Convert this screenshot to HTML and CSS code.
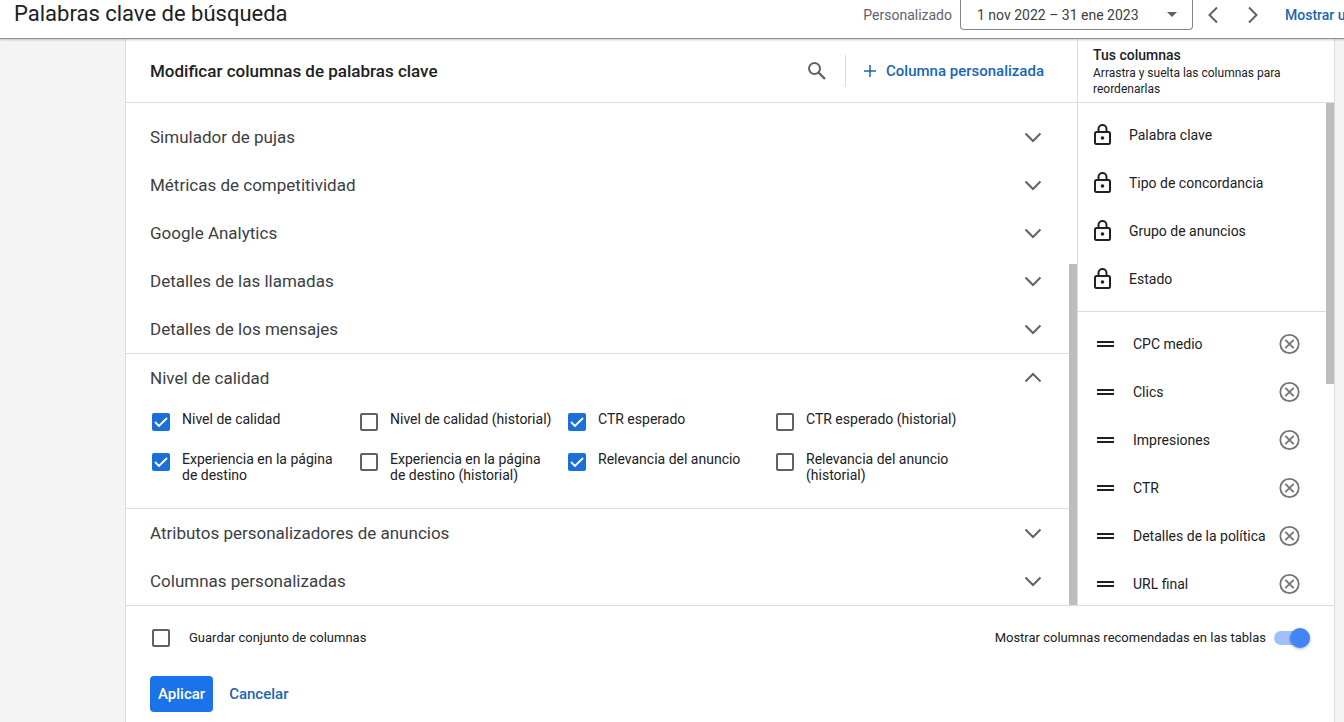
FILE: index.html
```html
<!DOCTYPE html>
<html lang="es">

<head>
    <meta charset="utf-8">
    <meta name="viewport" content="width=device-width, initial-scale=1">
    <title>Palabras clave de búsqueda</title>
    <link rel="stylesheet" href="styles.css">
</head>

<body>
    <!-- shared icons -->
    <svg class="sprite" aria-hidden="true">
        <symbol id="chevron-down" viewBox="0 0 24 24">
            <path d="M4.500 8.500 12 16l7.500-7.500" fill="none" stroke="currentColor" stroke-width="2" />
        </symbol>
        <symbol id="chevron-up" viewBox="0 0 24 24">
            <path d="M4.500 15.500 12 8l7.500 7.500" fill="none" stroke="currentColor" stroke-width="2" />
        </symbol>
        <symbol id="lock" viewBox="0 0 24 24">
            <rect x="5" y="9" width="15" height="12" rx="1.500" fill="none" stroke="currentColor" stroke-width="2" />
            <path d="M8.500 9V6a4 4 0 0 1 8 0v3" fill="none" stroke="currentColor" stroke-width="2" />
            <circle cx="12.500" cy="15" r="1.800" fill="currentColor" />
        </symbol>
        <symbol id="drag" viewBox="0 0 24 24">
            <path d="M4 9h17v2H4zM4 13h17v2H4z" fill="currentColor" />
        </symbol>
        <symbol id="remove" viewBox="0 0 24 24">
            <circle cx="11.500" cy="12" r="9.200" fill="none" stroke="currentColor" stroke-width="1.800" />
            <path d="M7.300 7.800l8.400 8.400M15.700 7.800l-8.400 8.400" fill="none" stroke="currentColor" stroke-width="1.800" />
        </symbol>
    </svg>

    <header class="topbar">
        <h1 class="topbar-title">Palabras clave de búsqueda</h1>
        <div class="date-range">
            <span class="date-label">Personalizado</span>
            <button class="date-button" type="button">
                1 nov 2022 – 31 ene 2023
                <svg class="caret" viewBox="0 0 10 5" aria-hidden="true"><path d="M0 0h10L5 5z" fill="currentColor" /></svg>
            </button>
            <button class="arrow-button" type="button" aria-label="Anterior">
                <svg viewBox="0 0 24 24"><path d="M16 4.500 8.500 12l7.500 7.500" fill="none" stroke="currentColor" stroke-width="2" /></svg>
            </button>
            <button class="arrow-button" type="button" aria-label="Siguiente">
                <svg viewBox="0 0 24 24"><path d="M8 4.500l7.500 7.500L8 19.500" fill="none" stroke="currentColor" stroke-width="2" /></svg>
            </button>
            <a class="show-link" href="#">Mostrar u</a>
        </div>
    </header>

    <main class="dialog">
        <div class="workspace">
            <section class="editor">
                <div class="editor-header">
                    <h2 class="editor-title">Modificar columnas de palabras clave</h2>
                    <button class="search-button" type="button" aria-label="Buscar">
                        <svg viewBox="0 0 24 24"><circle cx="9.500" cy="9.500" r="5.500" fill="none" stroke="currentColor" stroke-width="2" /><path d="M13.500 13.500l6.500 6.500" fill="none" stroke="currentColor" stroke-width="2.400" /></svg>
                    </button>
                    <button class="custom-button" type="button">
                        <svg viewBox="0 0 12 12" aria-hidden="true"><path d="M6 0v12M0 6h12" fill="none" stroke="currentColor" stroke-width="1.500" /></svg>
                        Columna personalizada
                    </button>
                </div>
                <div class="scroller">
                    <div class="groups">
                        <button class="group" type="button" aria-expanded="false">Simulador de pujas <svg class="icon"><use href="#chevron-down" /></svg></button>
                        <button class="group" type="button" aria-expanded="false">Métricas de competitividad <svg class="icon"><use href="#chevron-down" /></svg></button>
                        <button class="group" type="button" aria-expanded="false">Google Analytics <svg class="icon"><use href="#chevron-down" /></svg></button>
                        <button class="group" type="button" aria-expanded="false">Detalles de las llamadas <svg class="icon"><use href="#chevron-down" /></svg></button>
                        <button class="group" type="button" aria-expanded="false">Detalles de los mensajes <svg class="icon"><use href="#chevron-down" /></svg></button>
                        <div class="group-open">
                            <button class="group" type="button" aria-expanded="true">Nivel de calidad <svg class="icon"><use href="#chevron-up" /></svg></button>
                            <div class="options">
                                <label class="option"><input class="checkbox" type="checkbox" checked> <span>Nivel de calidad</span></label>
                                <label class="option"><input class="checkbox" type="checkbox"> <span>Nivel de calidad (historial)</span></label>
                                <label class="option"><input class="checkbox" type="checkbox" checked> <span>CTR esperado</span></label>
                                <label class="option"><input class="checkbox" type="checkbox"> <span>CTR esperado (historial)</span></label>
                                <label class="option"><input class="checkbox" type="checkbox" checked> <span>Experiencia en la página de destino</span></label>
                                <label class="option"><input class="checkbox" type="checkbox"> <span>Experiencia en la página de destino (historial)</span></label>
                                <label class="option"><input class="checkbox" type="checkbox" checked> <span>Relevancia del anuncio</span></label>
                                <label class="option"><input class="checkbox" type="checkbox"> <span>Relevancia del anuncio (historial)</span></label>
                            </div>
                        </div>
                        <button class="group" type="button" aria-expanded="false">Atributos personalizadores de anuncios <svg class="icon"><use href="#chevron-down" /></svg></button>
                        <button class="group" type="button" aria-expanded="false">Columnas personalizadas <svg class="icon"><use href="#chevron-down" /></svg></button>
                    </div>
                    <div class="track track-end" aria-hidden="true"><div class="thumb thumb-groups"></div></div>
                </div>
            </section>

            <aside class="selected">
                <div class="selected-header">
                    <h2 class="selected-title">Tus columnas</h2>
                    <p class="selected-hint">Arrastra y suelta las columnas para reordenarlas</p>
                </div>
                <div class="scroller">
                    <div class="lists">
                        <ul class="list list-locked">
                            <li class="column"><svg class="icon"><use href="#lock" /></svg> Palabra clave</li>
                            <li class="column"><svg class="icon"><use href="#lock" /></svg> Tipo de concordancia</li>
                            <li class="column"><svg class="icon"><use href="#lock" /></svg> Grupo de anuncios</li>
                            <li class="column"><svg class="icon"><use href="#lock" /></svg> Estado</li>
                        </ul>
                        <ul class="list list-sortable">
                            <li class="column"><svg class="icon"><use href="#drag" /></svg> <span class="name">CPC medio</span> <button class="remove" type="button" aria-label="Quitar CPC medio"><svg class="icon"><use href="#remove" /></svg></button></li>
                            <li class="column"><svg class="icon"><use href="#drag" /></svg> <span class="name">Clics</span> <button class="remove" type="button" aria-label="Quitar Clics"><svg class="icon"><use href="#remove" /></svg></button></li>
                            <li class="column"><svg class="icon"><use href="#drag" /></svg> <span class="name">Impresiones</span> <button class="remove" type="button" aria-label="Quitar Impresiones"><svg class="icon"><use href="#remove" /></svg></button></li>
                            <li class="column"><svg class="icon"><use href="#drag" /></svg> <span class="name">CTR</span> <button class="remove" type="button" aria-label="Quitar CTR"><svg class="icon"><use href="#remove" /></svg></button></li>
                            <li class="column"><svg class="icon"><use href="#drag" /></svg> <span class="name">Detalles de la política</span> <button class="remove" type="button" aria-label="Quitar Detalles de la política"><svg class="icon"><use href="#remove" /></svg></button></li>
                            <li class="column"><svg class="icon"><use href="#drag" /></svg> <span class="name">URL final</span> <button class="remove" type="button" aria-label="Quitar URL final"><svg class="icon"><use href="#remove" /></svg></button></li>
                        </ul>
                    </div>
                    <div class="track" aria-hidden="true"><div class="thumb thumb-lists"></div></div>
                </div>
            </aside>
        </div>

        <footer class="actions">
            <div class="settings">
                <label class="save-set"><input class="checkbox" type="checkbox"> Guardar conjunto de columnas</label>
                <label class="recommended">Mostrar columnas recomendadas en las tablas <input class="switch" type="checkbox" role="switch" checked></label>
            </div>
            <div class="buttons">
                <button class="apply" type="button">Aplicar</button>
                <button class="cancel" type="button">Cancelar</button>
            </div>
        </footer>
    </main>
</body>

</html>
```
FILE: styles.css
```css
* {
    box-sizing: border-box;
}

body {
    display: flex;
    flex-direction: column;
    height: 100vh;
    margin: 0;
    overflow: hidden;
    background: #f4f4f4;
    color: #202124;
    font-family: Roboto, "Liberation Sans", sans-serif;
    font-size: 14px;
    line-height: 16px;
}

h1,
h2,
p,
ul {
    margin: 0;
    padding: 0;
}

button {
    padding: 0;
    border: 0;
    background: none;
    color: inherit;
    font: inherit;
    cursor: pointer;
}

.sprite {
    display: none;
}

.icon {
    flex: none;
    width: 24px;
    height: 24px;
}

/* top bar */

.topbar {
    display: flex;
    justify-content: space-between;
    flex: none;
    height: 39px;
    padding-left: 14px;
    background: #fff;
    border-bottom: 1px solid #929292;
    box-shadow: 0 1px 2px rgba(0, 0, 0, 0.2);
    white-space: nowrap;
    z-index: 1;
}

.topbar-title {
    font-size: 22px;
    font-weight: 400;
    line-height: 28px;
}

.date-range {
    display: flex;
    align-items: center;
    height: 30px;
}

.date-label {
    margin-right: 8px;
    color: #5f6368;
}

.date-button {
    display: flex;
    align-items: center;
    justify-content: space-between;
    width: 233px;
    height: 30px;
    padding: 0 15px 0 16px;
    border: 1px solid #80868b;
    border-top: 0;
    border-radius: 0 0 4px 4px;
    color: #3c4043;
}

.caret {
    width: 10px;
    height: 5px;
    color: #5f6368;
}

.arrow-button {
    height: 24px;
    width: 24px;
    margin-left: 8px;
    color: #5f6368;
}

.arrow-button + .arrow-button {
    margin-left: 16px;
}

.show-link {
    width: 59px;
    margin-left: 20px;
    color: #1967b3;
    font-weight: 500;
    text-decoration: none;
}

/* dialog */

.dialog {
    display: flex;
    flex: 1;
    flex-direction: column;
    min-height: 0;
    margin: 0 9px 0 125px;
    background: #fff;
    border: 1px solid #dadce0;
    border-width: 0 1px;
}

.workspace {
    display: flex;
    flex: 1;
    min-height: 0;
}

.editor,
.selected {
    display: flex;
    flex-direction: column;
}

.editor {
    flex: 1;
}

.editor-header,
.selected-header {
    flex: none;
    height: 64px;
    border-bottom: 1px solid #dadce0;
}

.editor-header {
    display: flex;
    align-items: center;
    padding: 0 33px 0 24px;
}

.editor-title {
    flex: 1;
    font-size: 17px;
    font-weight: 500;
}

.search-button {
    width: 24px;
    height: 24px;
    margin-right: 16px;
    color: #5f6368;
}

.custom-button {
    display: flex;
    align-items: center;
    gap: 10px;
    height: 32px;
    padding-left: 18px;
    border-left: 1px solid #dadce0;
    color: #1967b3;
    font-size: 15px;
    font-weight: 500;
}

.custom-button svg {
    width: 12px;
    height: 12px;
}

.scroller {
    display: flex;
    flex: 1;
    min-height: 0;
    overflow: hidden;
}

.track {
    display: flex;
    flex-direction: column;
    flex: none;
    width: 8px;
}

.track-end {
    justify-content: flex-end;
}

.thumb {
    background: #bdbdbd;
}

.thumb-groups {
    height: 68%;
}

.thumb-lists {
    height: 56%;
}

.groups {
    flex: 1;
    padding-top: 10px;
}

.group {
    display: flex;
    align-items: center;
    justify-content: space-between;
    width: 100%;
    height: 48px;
    padding: 0 24px;
    color: #3c4043;
    font-size: 17px;
}

.group .icon {
    color: #5f6368;
}

.group-open {
    border: 1px solid #dadce0;
    border-width: 1px 0;
}

.options {
    display: grid;
    grid-template-columns: repeat(4, 1fr);
    row-gap: 20px;
    padding: 9px 85px 25px 26px;
}

.option {
    display: flex;
    gap: 12px;
    padding-right: 12px;
    align-items: flex-start;
}

.checkbox {
    flex: none;
    width: 18px;
    height: 18px;
    margin: 0;
    border: 2px solid #5f6368;
    border-radius: 2px;
    appearance: none;
}

.checkbox:checked {
    border-color: #1b6fd8;
    background: #1b6fd8 url("data:image/svg+xml,%3Csvg xmlns='http://www.w3.org/2000/svg' viewBox='0 0 14 14'%3E%3Cpath d='M1 7l4 4 8-8' fill='none' stroke='%23fff' stroke-width='1.800'/%3E%3C/svg%3E") center / 14px no-repeat;
}

.option .checkbox {
    margin-top: 2px;
}

/* selected columns */

.selected {
    flex: none;
    width: 257px;
    border-left: 1px solid #dadce0;
}

.selected-header {
    padding: 8px 15px 0;
}

.selected-title {
    font-size: 14px;
    font-weight: 500;
}

.selected-hint {
    padding-top: 2px;
    font-size: 12px;
}

.lists {
    flex: 1;
}

.list {
    padding: 8px 24px 8px 12px;
    list-style: none;
}

.list-locked {
    border-bottom: 1px solid #dadce0;
}

.column {
    display: flex;
    align-items: center;
    height: 48px;
    gap: 15px;
}

.list-sortable {
    padding-left: 15px;
}

.list-sortable .column {
    gap: 12px;
}

.list-sortable .name {
    padding-left: 4px;
}

.name {
    flex: 1;
    white-space: nowrap;
}

.remove {
    display: flex;
    color: #757575;
}

/* footer */

.actions {
    flex: none;
    padding: 12px 24px 10px;
    border-top: 1px solid #dadce0;
}

.settings {
    display: flex;
    align-items: center;
    justify-content: space-between;
    height: 40px;
    margin-bottom: 18px;
    font-size: 13px;
}

.save-set,
.recommended {
    display: flex;
    align-items: center;
}

.save-set {
    gap: 19px;
    padding-left: 2px;
}

.recommended {
    gap: 8px;
}

.switch {
    display: flex;
    align-items: center;
    justify-content: flex-end;
    width: 36px;
    height: 14px;
    margin: 0;
    border-radius: 7px;
    background: #a0c0f9;
    appearance: none;
}

.switch::before {
    content: "";
    width: 20px;
    height: 20px;
    border-radius: 50%;
    background: #4285f4;
    box-shadow: 0 1px 3px rgba(0, 0, 0, 0.3);
}

.buttons {
    display: flex;
    gap: 8px;
    font-size: 15px;
    font-weight: 500;
}

.apply,
.cancel {
    height: 36px;
    padding: 0 8px;
    border-radius: 4px;
}

.apply {
    background: #1a73e8;
    color: #fff;
}

.cancel {
    color: #1967b3;
}
```
